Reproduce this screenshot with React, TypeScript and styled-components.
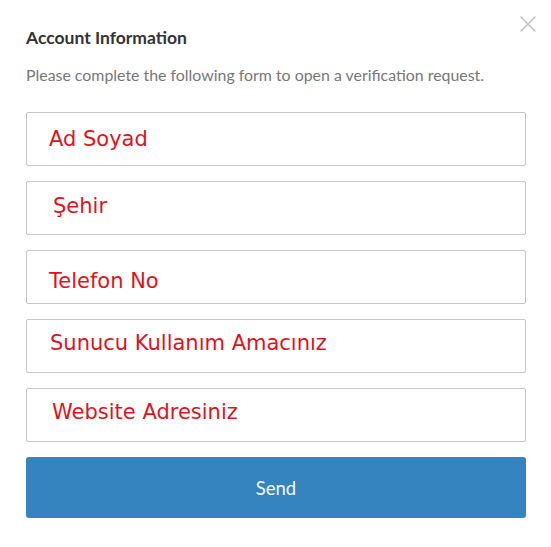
import styled, { createGlobalStyle } from "styled-components"

const GlobalStyle = createGlobalStyle`
  html, body {
    margin: 0;
    padding: 0;
    background: #fff;
  }
  * {
    box-sizing: border-box;
  }
`

const fields = [
  { label: "Ad Soyad", dx: 22, dy: 0 },
  { label: "Şehir", dx: 26, dy: -2 },
  { label: "Telefon No", dx: 22, dy: 4 },
  { label: "Sunucu Kullanım Amacınız", dx: 23, dy: -3 },
  { label: "Website Adresiniz", dx: 25, dy: -3 },
]

const App = () => {
  return (
    <>
      <GlobalStyle />
      <Modal>
        <Close aria-label="Close">
          <svg width="18" height="18" viewBox="0 0 18 18">
            <path d="M1.5 1.5 L16.5 16.5 M16.5 1.5 L1.5 16.5" stroke="#c4c4c4" strokeWidth="1.6" />
          </svg>
        </Close>
        <Title>Account Information</Title>
        <Subtitle>Please complete the following form to open a verification request.</Subtitle>

        <Form>
          {fields.map((f) => (
            <Field key={f.label} $dx={f.dx} $dy={f.dy}>
              <Placeholder>{f.label}</Placeholder>
            </Field>
          ))}
          <SendButton type="button">Send</SendButton>
        </Form>
      </Modal>
    </>
  )
}

export default App

const Modal = styled.div`
  position: relative;
  width: 551px;
  height: 547px;
  padding: 28px 25px 0 26px;
  background: #fff;
  font-family: Lato, "Open Sans", sans-serif;
`

const Close = styled.button`
  position: absolute;
  top: 15px;
  right: 14px;
  padding: 0;
  border: 0;
  background: none;
  line-height: 0;
  cursor: pointer;
`

const Title = styled.h4`
  margin: 0;
  font-size: 17.5px;
  line-height: 20px;
  font-weight: 700;
  color: #333;
`

const Subtitle = styled.p`
  margin: 17px 0 0;
  font-size: 15.9px;
  line-height: 20px;
  color: #777;
`

const Form = styled.div`
  display: flex;
  flex-direction: column;
  gap: 15px;
  margin-top: 27px;
`

const Field = styled.div<{ $dx: number; $dy: number }>`
  display: flex;
  align-items: center;
  height: 54px;
  padding-left: ${(p) => p.$dx}px;
  border: 1px solid #c6c6c6;
  border-radius: 2px;
  background: #fff;

  span {
    transform: translateY(${(p) => p.$dy}px);
  }
`

const Placeholder = styled.span`
  font-family: "DejaVu Sans", Verdana, sans-serif;
  font-size: 21px;
  color: #dc141d;
`

const SendButton = styled.button`
  height: 61px;
  border: 0;
  border-radius: 3px;
  background: #3584bf;
  color: #f2f9ff;
  font-family: Lato, "Open Sans", sans-serif;
  font-size: 18.5px;
  cursor: pointer;
`
